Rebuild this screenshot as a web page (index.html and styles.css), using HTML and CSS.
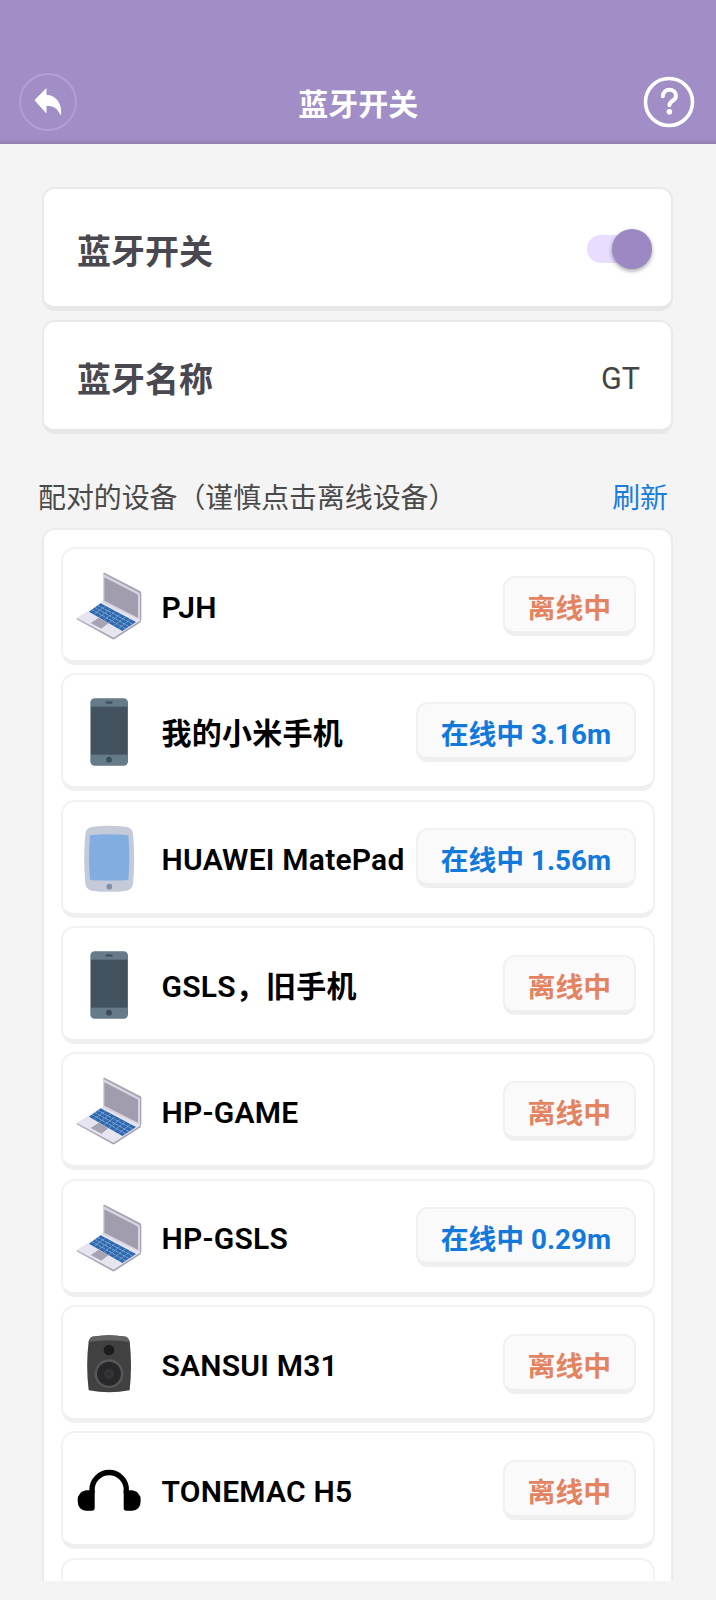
FILE: index.html
```
<!DOCTYPE html>
<html lang="zh-CN">

    <head>
        <meta charset="UTF-8">
        <meta name="viewport" content="width=device-width, initial-scale=1.0">
        <title>蓝牙开关</title>
        <link rel="stylesheet" href="styles.css">
    </head>

    <body>
        <svg class="sprite">
            <symbol id="laptop" viewBox="75 126 204 204">
                <path d="M160 129l4-1 106 55q4 2 4 6v78q0 4-3 6l-112-55z" fill="#a9a4b4" />
                <path d="M159 131l108 57q3 2 3 5v78l-111-54z" fill="#d8d5e0" />
                <path d="M163 142l99 51q2 1 2 4v66l-101-51z" fill="#a19daf" />
                <path d="M80 264v4l108 60q3 1 6-1l78-50v-6z" fill="#aaa4b3" />
                <path d="M80 264l77-48 115 55-79 51q-2 2-5 0z" fill="#e6e4ef" />
                <path d="M152 220l106 56-41 27-100-58z" fill="#2e68ae" />
                <path d="M143 226l105 56M134 232l104 58M125 238l103 59" stroke="#9dbfe4" stroke-width="2.4" stroke-dasharray="9 3" />
                <path d="M167 228l-35 25M182 236l-35 26M197 244l-35 26M212 252l-35 27M227 260l-36 27M242 268l-37 28" stroke="#86acd8" stroke-width="2" />
                <path d="M146 263l30 16-22 17-32-17z" fill="#a8a3b3" />
            </symbol>
            <symbol id="phone" viewBox="75 505 204 204">
                <rect x="121" y="506" width="113" height="202" rx="13" fill="#657b89" />
                <rect x="123" y="531" width="109" height="144" fill="#42525f" />
                <rect x="166" y="515" width="22" height="7" rx="3.500" fill="#42525f" />
                <circle cx="177" cy="690" r="8.500" fill="#3c4c58" />
            </symbol>
            <symbol id="tablet" viewBox="75 104 204 204">
                <path d="M125 110Q177 102 230 110Q247 113 249 130Q256 205 249 280Q247 297 230 301Q177 308 125 301Q109 297 106 280Q99 205 106 130Q109 113 125 110z" fill="#c4cad8" />
                <path d="M120 135Q177 129 235 135Q241 202 235 269Q177 272 120 269Q114 202 120 135z" fill="#82ade0" />
                <circle cx="178" cy="289" r="8.500" fill="#8190a7" />
            </symbol>
            <symbol id="speaker" viewBox="75 90 204 204">
                <path d="M126 110Q177 101 228 110Q236 113 239 124Q247 198 239 271Q177 283 116 271Q107 198 116 124Q119 113 126 110z" fill="#414142" />
                <path d="M126 110Q177 101 228 110Q236 113 238 126Q177 116 117 126Q119 113 126 110z" fill="#636364" />
                <circle cx="177" cy="150" r="16" fill="#1c1c1d" />
                <circle cx="177" cy="221" r="43" fill="#58585a" />
                <circle cx="177" cy="221" r="36" fill="#28282a" />
                <circle cx="177" cy="222" r="15" fill="#343436" />
                <circle cx="177" cy="222" r="6" fill="#2f2f31" />
            </symbol>
            <symbol id="headphones" viewBox="75 469 204 204">
                <path d="M126 580v-10a51 51 0 0 1 103 0v10" fill="none" stroke="#000" stroke-width="16" />
                <path d="M108 572h26v53q0 8-8 8h-18q-25-3-25-30t25-31z" />
                <path d="M247 572h-26v53q0 8 8 8h18q25-3 25-30t-25-31z" />
            </symbol>
        </svg>

        <header class="header">
            <button class="back">
                <svg viewBox="0 0 28 28" width="28" height="28">
                    <path d="M1 12.200L12 .800v6.500c10 0 15.500 8.500 14.600 19.200-3.300-7-7.600-9.500-14.600-9v7z" fill="#fff" stroke="#fff" stroke-width="1" stroke-linejoin="round" />
                </svg>
            </button>
            <h1 class="title">蓝牙开关</h1>
            <button class="help">
                <svg viewBox="0 0 52 52" width="52" height="52" fill="none" stroke="#fff">
                    <circle cx="26" cy="26" r="23.500" stroke-width="3.600" />
                    <path d="M19.800 20.300c0-8.800 13.200-8.400 13.200-.300 0 5-6.600 4.500-6.600 9.200" stroke-width="4" stroke-linecap="round" />
                    <circle cx="26.400" cy="35.800" r="2.800" fill="#fff" stroke="none" />
                </svg>
            </button>
        </header>

        <main class="content">
            <section class="card switch-card">
                <span class="label">蓝牙开关</span>
                <div class="switch"><div class="thumb"></div></div>
            </section>

            <section class="card name-card">
                <span class="label">蓝牙名称</span>
                <span class="value">GT</span>
            </section>

            <div class="list-head">
                <span>配对的设备（谨慎点击离线设备）</span>
                <a class="refresh">刷新</a>
            </div>

            <section class="list">
                <div class="item">
                    <svg class="icon"><use href="#laptop" /></svg>
                    <span class="name">PJH</span>
                    <span class="status">离线中</span>
                </div>
                <div class="item">
                    <svg class="icon"><use href="#phone" /></svg>
                    <span class="name">我的小米手机</span>
                    <span class="status online">在线中 3.16m</span>
                </div>
                <div class="item">
                    <svg class="icon"><use href="#tablet" /></svg>
                    <span class="name">HUAWEI MatePad</span>
                    <span class="status online">在线中 1.56m</span>
                </div>
                <div class="item">
                    <svg class="icon"><use href="#phone" /></svg>
                    <span class="name">GSLS，旧手机</span>
                    <span class="status">离线中</span>
                </div>
                <div class="item">
                    <svg class="icon"><use href="#laptop" /></svg>
                    <span class="name">HP-GAME</span>
                    <span class="status">离线中</span>
                </div>
                <div class="item">
                    <svg class="icon"><use href="#laptop" /></svg>
                    <span class="name">HP-GSLS</span>
                    <span class="status online">在线中 0.29m</span>
                </div>
                <div class="item">
                    <svg class="icon"><use href="#speaker" /></svg>
                    <span class="name">SANSUI M31</span>
                    <span class="status">离线中</span>
                </div>
                <div class="item">
                    <svg class="icon"><use href="#headphones" /></svg>
                    <span class="name">TONEMAC H5</span>
                    <span class="status">离线中</span>
                </div>
                <div class="item"></div>
            </section>
        </main>
    </body>

</html>
```
FILE: styles.css
```
* {
    box-sizing: border-box;
}

body {
    font-family: Roboto, "Noto Sans CJK SC", sans-serif;
    background-color: #f4f4f4;
    margin: 0;
    height: 1600px;
    overflow: hidden;
}

.sprite {
    display: none;
}

button {
    background: none;
    border: none;
    padding: 0;
    display: flex;
    align-items: center;
    justify-content: center;
}

.header {
    height: 144px;
    padding: 60px 21.500px 0 19px;
    display: flex;
    align-items: center;
    justify-content: space-between;
    background: linear-gradient(#a18ec6 0, #a18ec6 138px, #957fb3 144px);
}

.back {
    width: 58px;
    height: 58px;
    border: 2px solid #b39fd8;
    border-radius: 50%;
}

.help {
    width: 52px;
    height: 52px;
}

.title {
    margin: 0;
    padding: 5px 3px 0 0;
    font-size: 30px;
    line-height: 40px;
    font-weight: bold;
    color: #fff;
}

.content {
    padding: 43px 43px 0 42px;
}

.card {
    display: flex;
    align-items: center;
    justify-content: space-between;
    background: #fff;
    border: 2px solid #e9e9ec;
    border-bottom: 5px solid #e7e7e7;
    border-radius: 13px;
    padding-left: 33px;
}

.switch-card {
    height: 124px;
    padding-right: 19px;
}

.name-card {
    height: 114px;
    margin-top: 9px;
    padding-right: 31px;
}

.label {
    font-size: 34px;
    font-weight: bold;
    color: #49474f;
    padding-top: 4px;
}

.value {
    font-size: 30.500px;
    color: #444;
    padding-top: 6px;
}

.switch {
    width: 65px;
    height: 28px;
    margin-top: 3px;
    border-radius: 14px;
    background: #e8dcff;
    display: flex;
    align-items: center;
    justify-content: flex-end;
}

.thumb {
    width: 40px;
    height: 40px;
    border-radius: 50%;
    background: #9c88c2;
    box-shadow: 0 2px 4px rgba(0, 0, 0, 0.35);
}

.list-head {
    display: flex;
    justify-content: space-between;
    margin: 45px 5px 0 -4px;
    height: 49px;
    line-height: 40px;
    font-size: 27.900px;
    color: #4a4a4a;
}

.refresh {
    color: #1a7ddb;
}

.list {
    height: 1053px;
    overflow: hidden;
    background: #fff;
    border: 2px solid #ebebeb;
    border-bottom: none;
    border-radius: 13px 13px 0 0;
    padding: 17px 16px 0 17px;
}

.item {
    display: flex;
    align-items: center;
    height: 118px;
    margin-bottom: 8.350px;
    padding: 0 17px 0 12px;
    border: 2px solid #f2f2f2;
    border-bottom: 5px solid #efefef;
    border-radius: 14px;
}

.icon {
    width: 68px;
    height: 68px;
    margin: 3px 18.600px 0 0;
}

.name {
    flex: 1;
    font-size: 30px;
    line-height: 40px;
    font-weight: 600;
    letter-spacing: 0.220px;
    color: #000;
    white-space: nowrap;
    padding-top: 6px;
}

.status {
    height: 60px;
    line-height: 57px;
    padding: 2px 23px 0;
    font-size: 27.800px;
    font-weight: bold;
    color: #e3835f;
    background: #fafafb;
    border: 2px solid #f1f1f2;
    border-bottom: 5px solid #efefef;
    border-radius: 12px;
    margin-top: 2px;
    white-space: nowrap;
}

.online {
    color: #1279dc;
}
```
